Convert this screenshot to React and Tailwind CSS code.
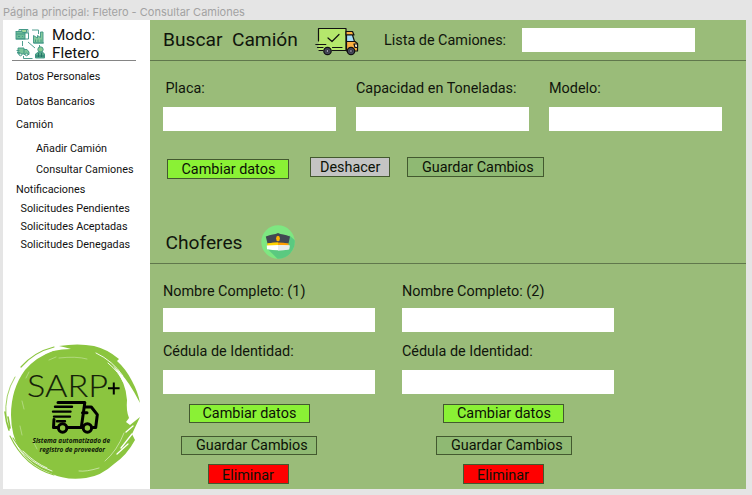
import React from "react";

const Label = ({ children, className = "" }) => (
  <div className={`whitespace-nowrap leading-[18px] ${className}`}>{children}</div>
);

const Field = ({ className = "" }) => (
  <input className={`block h-6 bg-white outline-none ${className}`} />
);

const Button = ({ children, className = "" }) => (
  <button
    className={`block shrink-0 whitespace-nowrap border border-[#43592f] text-left text-[14.4px] leading-[17px] text-[#0c1206] ${className}`}
  >
    {children}
  </button>
);

function NetworkIcon() {
  return (
    <svg className="ml-[12px] mt-[8px] h-[32px] w-[30px] shrink-0" viewBox="0 0 30 32" fill="none" stroke="#3c9484" strokeWidth="0.9">
      <rect x="1" y="3.5" width="9" height="7.5" fill="#6fbd98" />
      <path d="M4 3.5V1.5h9v3.5M1 6h9M10 5h3.5v6H1M3 8.5h2M7 8.5h1" />
      <path d="M5.500 1.500h6v3h-4z" fill="#a4d89a" />
      <path d="M17 2h6.500v4M7.500 13v5M13 14l7 6M24.500 17v3M8.500 28v2.500h9" />
      <path d="M18.500 15V7.500l4 2.500V7.500l3 2V4h2.500v11z" fill="#86ca9c" />
      <path d="M20.500 14v-2.500M23 14v-2.500M26 14v-2.500M18.500 15h10.500" />
      <path d="M3 20h6v6H3zM9 21.500h3l2 2.500v2.500H9" fill="#7cc59b" />
      <path d="M1.500 22.500h3M2 24.500h3" />
      <circle cx="5.500" cy="26.500" r="1.300" fill="#dff0e2" />
      <circle cx="11.500" cy="26.500" r="1.300" fill="#dff0e2" />
      <circle cx="25.500" cy="21.500" r="2.700" fill="#8acb92" />
      <path d="M20.500 30v-4l3-2h4l2 2v4z" fill="#58ab8b" />
      <path d="M23.500 25v4M26.500 25v4M20.500 28h9" stroke="#206f66" />
    </svg>
  );
}

function TruckIcon() {
  return (
    <svg className="ml-[16px] mt-[7px] h-[29px] w-[44px] shrink-0" viewBox="0 0 44 29" fill="none" stroke="#111" strokeWidth="1.200" strokeLinejoin="round" strokeLinecap="round">
      <path d="M3.500 1.500h27.500v22H3.500z" fill="#b5e76c" stroke="none" />
      <path d="M3.500 14V1.500H31v21M4 23.500h4M17 23.500h14M17.500 20.500h9.500" />
      <path d="M31 4.500h6.500l1.500 3.500H31z" fill="#fbb040" />
      <path d="M31.500 8h6l2 6.500h-8z" fill="#a5dcf7" />
      <path d="M31.500 14.500h8.500l2.500 2V24h-11z" fill="#fbb040" />
      <path d="M39 17h3.500v3.500H40z" fill="#fff0d0" />
      <path d="M.8 17.500h10M2.500 20.500h5.500M13 11l4 3.500 7-7" />
      <circle cx="12.500" cy="24" r="3.700" fill="#44485a" />
      <circle cx="12.500" cy="24" r="1.300" fill="#aaa9bc" strokeWidth=".5" />
      <circle cx="36" cy="24" r="3.700" fill="#44485a" />
      <circle cx="36" cy="24" r="1.300" fill="#aaa9bc" strokeWidth=".5" />
    </svg>
  );
}

function CapIcon() {
  return (
    <svg className="ml-[17.500px] h-[34px] w-[34px] shrink-0" viewBox="0 0 34 34">
      <circle cx="17" cy="17" r="16.700" fill="#7ee781" />
      <path d="M6 23.500l10.500 10.200A16.700 16.700 0 0 0 33.600 15L28.500 10.500z" fill="#5bc980" />
      <path d="M4.800 11.500C10 9.500 14 9.500 17 8c3 1.500 7 1.500 12 3.500L27.500 18.500H6.500z" fill="#414952" />
      <path d="M6.500 18.500q10.500-2 21 0v2.500h-21z" fill="#ff9f00" />
      <path d="M6.500 18.500Q12 17.400 17 17.500V21H6.500z" fill="#ffd400" />
      <path d="M5.800 20.500q11.200-1 22.800 0l-.5 3.700Q17 26.500 6 24.200z" fill="#fff" />
      <path d="M17 20q6 0 11.600.5l-.5 3.700Q23 25.400 17 25.500z" fill="#e7eceb" />
      <ellipse cx="17" cy="13.500" rx="1.900" ry="2.700" fill="#ffb400" />
    </svg>
  );
}

function Logo() {
  return (
    <svg className="ml-[1px] h-[140px] w-[140px]" viewBox="4 342 140 140">
      <path d="M59 346Q78 343 94 346Q107 349 119 359L117 361Q126 369 132 381Q138 392 140 403L134 392Q125 376 113 366Q126 382 127 400Q126 411 129 418L126 422L130 425L140 417L132 434L135 440Q127 455 114 464Q101 476 86 478Q66 481 50 473Q31 466 20 450Q11 435 11 415Q11 389 25 370Q36 357 53 351Q62 349 71 349Q64 347 59 346Z" fill="#8bc53f" />
      <g fill="none" stroke="#8bc53f" strokeLinecap="round">
        <path d="M54 347Q34 352 21 367" strokeWidth="1.200" />
        <path d="M15 377Q4 395 6 417" strokeWidth=".8" />
        <path d="M5 412Q6 422 9 430M8 417L10 428" strokeWidth="1.600" />
        <path d="M10 436Q25 467 54 475M13 438Q28 462 50 470" strokeWidth="1.100" />
      </g>
      <g fill="none" stroke="#fff" strokeLinecap="round">
        <path d="M57 349Q38 354 28 365" strokeWidth=".9" />
        <path d="M17 446Q31 464 52 471M23 451Q35 463 47 468" strokeWidth=".8" />
        <path d="M96 353Q113 361 123 376M108 363Q119 372 124 383" strokeWidth=".9" />
        <path d="M121 448L132 434M117 454L128 444M126 432L133 426" strokeWidth="1.300" />
        <path d="M124 433Q117 451 105 461M99 468Q86 472 79 471" strokeWidth=".5" />
        <path d="M59 358Q76 356 87 359M49 360L56 357M29 372L26 378M22 401L24 409M20 426L22 435M33 441L37 449" strokeWidth=".5" opacity=".65" />
      </g>
      <text x="27" y="397" textLength="81" lengthAdjust="spacingAndGlyphs" className="font-['Lato'] text-[32px] font-light" fill="#142108" stroke="#142108" strokeWidth=".15">SARP</text>
      <path d="M113.800 382.500v12M108 388.300h11.600" stroke="#000" strokeWidth="2" />
      <g fill="none" stroke="#000" strokeWidth="3" strokeLinejoin="round" strokeLinecap="round">
        <path d="M58 402.600H84.800L81.300 427.500M84 407H91.300L97.300 414.700L95.700 427.500H93M82 427.500H68M57 427.500H53.500L54 419.500M82.500 412.800H87" />
        <path d="M55 406.700H72M53 411.600H70.500M54 416.600H70M57 421.200H65" strokeWidth="2.400" />
        <circle cx="62.600" cy="428" r="4.200" />
        <circle cx="87.400" cy="428" r="4.200" />
      </g>
      <g className="font-['Open_Sans'] text-[7px] font-bold italic" fill="#101a08">
        <text x="32.500" y="443" textLength="77.500" lengthAdjust="spacingAndGlyphs">Sistema automatizado de</text>
        <text x="39.500" y="451.500" textLength="65.500" lengthAdjust="spacingAndGlyphs">registro de proveedor</text>
      </g>
    </svg>
  );
}

function Driver({ number, wide }) {
  return (
    <section className="w-[212px]">
      <Label>Nombre Completo: ({number})</Label>
      <Field className="mt-[7px] w-[212px]" />
      <Label className="mt-[11px]">Cédula de Identidad:</Label>
      <Field className="mt-[9px] w-[212px]" />
      <div className={wide ? "ml-[16px]" : ""}>
        <Button className={`mt-[10px] h-[19px] w-[121px] bg-[#8af135] ${wide ? "ml-[25px] pl-[13px]" : "ml-[26px] pl-[12.500px]"}`}>Cambiar datos</Button>
        <Button className="ml-[18px] mt-[13px] h-[19px] w-[136px] bg-[#8fb973] pl-[14px]">Guardar Cambios</Button>
        <Button className="ml-[45px] mt-[9px] h-5 w-[81px] bg-[#ff0000] pl-[13px] pt-[2px]">Eliminar</Button>
      </div>
    </section>
  );
}

export default function App() {
  return (
    <div className="flex h-[495px] w-[752px] flex-col overflow-hidden bg-[#e5e5e5] font-['Roboto',sans-serif] text-[14.4px] text-[#10150c]">
      <div className="h-5 shrink-0 whitespace-nowrap pl-[3px] pt-[3px] font-['Inter',sans-serif] text-[11px] leading-[18px] text-[#a2a2a2]">
        Página principal: Fletero - Consultar Camiones
      </div>
      <div className="ml-[3px] flex h-[469px] w-[743px]">
        <aside className="flex w-[147px] shrink-0 flex-col bg-white text-[10.800px] text-[#111]">
          <div className="flex h-[40px]">
            <NetworkIcon />
            <div className="ml-[7px] mt-[6px] text-[15.300px] leading-[18px]">
              <div>Modo:</div>
              <div>Fletero</div>
            </div>
          </div>
          <div className="ml-[9px] h-px w-[124px] shrink-0 bg-[#858585]" />
          <nav className="ml-[13px] h-[263px] shrink-0">
            <Label className="mt-[7px]">Datos Personales</Label>
            <Label className="mt-[7px]">Datos Bancarios</Label>
            <Label className="mt-[5px]">Camión</Label>
            <Label className="ml-[20px] mt-[6px]">Añadir Camión</Label>
            <Label className="ml-[20px] mt-[3px]">Consultar Camiones</Label>
            <Label className="mt-[2px]">Notificaciones</Label>
            <Label className="ml-[4.500px] mt-[1px]">Solicitudes Pendientes</Label>
            <Label className="ml-[4.500px]">Solicitudes Aceptadas</Label>
            <Label className="ml-[4.500px]">Solicitudes Denegadas</Label>
          </nav>
          <div className="mt-[18px]">
            <Logo />
          </div>
        </aside>
        <main className="flex w-[596px] flex-col bg-[#9abc79]">
          <header className="flex h-[40px] shrink-0">
            <h1 className="ml-[13px] mt-[8px] w-[136px] whitespace-pre text-[19.200px] leading-[24px]">Buscar  Camión</h1>
            <TruckIcon />
            <Label className="ml-[25px] mt-[12px] w-[122px]">Lista de Camiones:</Label>
            <Field className="ml-[16px] mt-[8px] w-[173px]" />
          </header>
          <div className="h-px shrink-0 bg-[#60774c]" />
          <div className="flex gap-[20px] pl-[13px] pt-[19px]">
            <div>
              <Label className="pl-[2.500px]">Placa:</Label>
              <Field className="mt-[9px] w-[173px]" />
            </div>
            <div>
              <Label>Capacidad en Toneladas:</Label>
              <Field className="mt-[9px] w-[173px]" />
            </div>
            <div>
              <Label>Modelo:</Label>
              <Field className="mt-[9px] w-[173px]" />
            </div>
          </div>
          <div className="flex h-[50px] shrink-0 items-start pl-[17px] pt-[26px]">
            <Button className="mt-[2px] h-5 w-[122px] bg-[#8af135] pl-[13.500px] pt-px">Cambiar datos</Button>
            <Button className="ml-[21px] h-5 w-[80px] bg-[#c4c4c4] pl-[9px] pt-px">Deshacer</Button>
            <Button className="ml-[17px] h-5 w-[137px] bg-[#8fb973] pl-[14px] pt-px">Guardar Cambios</Button>
          </div>
          <div className="flex h-[82px] shrink-0 items-end">
            <h2 className="mb-[8px] ml-[15.500px] w-[78px] text-[19.200px] leading-[24px]">Choferes</h2>
            <div className="mb-[4px]"><CapIcon /></div>
          </div>
          <div className="h-px shrink-0 bg-[#60774c]" />
          <div className="flex gap-[27px] pl-[13px] pt-[19px]">
            <Driver number="1" />
            <Driver number="2" wide />
          </div>
        </main>
      </div>
    </div>
  );
}
